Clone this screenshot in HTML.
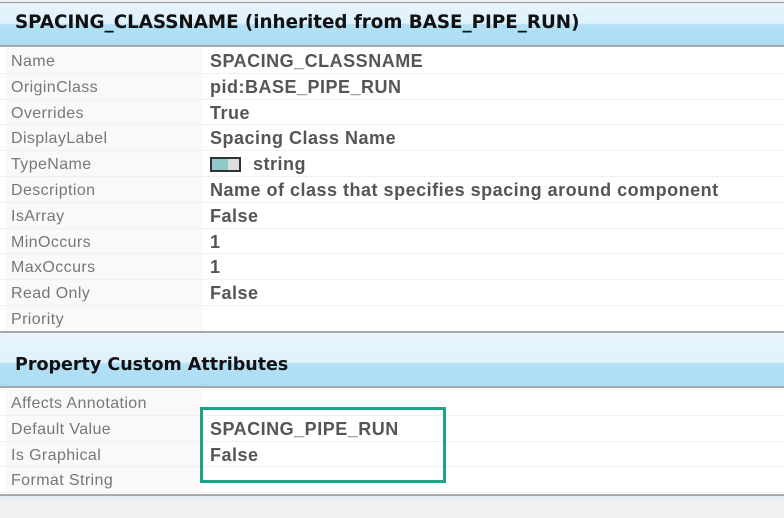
<!DOCTYPE html>
<html><head><style>
body{margin:0;width:784px;height:518px;background:#f0f0f0;position:relative;overflow:hidden;font-family:"Liberation Sans",sans-serif}
.hdr{position:absolute;left:0;width:784px;background:linear-gradient(#e6f4fd 0,#dff1fc 48%,#b2e0f6 52%,#aedcf4 100%);font-weight:bold;font-size:17.5px;color:#111;box-sizing:border-box;padding-left:15px;font-family:"DejaVu Sans",sans-serif}
.sec{position:absolute;left:0;width:784px;background:#fff}
.row{position:relative;height:25.8px;border-bottom:1px solid #f0f0f0;box-sizing:border-box}
.l{position:absolute;left:5px;top:0;width:198px;height:100%;background:#f9f9f9;color:#777;font-size:16px;letter-spacing:0.4px;line-height:27px;padding-left:6px;box-sizing:border-box}
.v{position:absolute;left:210px;top:0;color:#555;font-weight:bold;font-size:18px;letter-spacing:0.5px;line-height:27px;white-space:nowrap}
.line{position:absolute;left:0;width:784px;height:2px;background:#a8a8a8}
</style></head><body>
<div class="line" style="top:2px;height:1px;background:#999"></div>
<div class="hdr" style="top:3px;height:42px;line-height:40px;font-size:18.3px">SPACING_CLASSNAME (inherited from BASE_PIPE_RUN)</div>
<div class="line" style="top:45px"></div>
<div class="sec" style="top:47px;height:284px;padding-top:1px">
<div class="row"><div class="l">Name</div><div class="v">SPACING_CLASSNAME</div></div>
<div class="row"><div class="l">OriginClass</div><div class="v">pid:BASE_PIPE_RUN</div></div>
<div class="row"><div class="l">Overrides</div><div class="v">True</div></div>
<div class="row"><div class="l">DisplayLabel</div><div class="v">Spacing Class Name</div></div>
<div class="row"><div class="l">TypeName</div><div class="v"><span style="display:inline-block;width:31px;height:15px;border:2px solid #333;background:linear-gradient(90deg,#8fc9cc 0,#8fc9cc 60%,#ddd 60%);vertical-align:-2px;margin-right:12px;box-sizing:border-box"></span>string</div></div>
<div class="row"><div class="l">Description</div><div class="v">Name of class that specifies spacing around component</div></div>
<div class="row"><div class="l">IsArray</div><div class="v">False</div></div>
<div class="row"><div class="l">MinOccurs</div><div class="v">1</div></div>
<div class="row"><div class="l">MaxOccurs</div><div class="v">1</div></div>
<div class="row"><div class="l">Read Only</div><div class="v">False</div></div>
<div class="row"><div class="l">Priority</div></div>
</div>
<div class="line" style="top:331px"></div>
<div style="position:absolute;top:333px;left:0;width:784px;height:7px;background:#eaf3f9"></div>
<div class="hdr" style="top:340px;height:46px;line-height:50px">Property Custom Attributes</div>
<div class="line" style="top:386px"></div>
<div class="sec" style="top:388px;height:106px;padding-top:2px">
<div class="row"><div class="l">Affects Annotation</div></div>
<div class="row"><div class="l">Default Value</div><div class="v">SPACING_PIPE_RUN</div></div>
<div class="row"><div class="l">Is Graphical</div><div class="v">False</div></div>
<div class="row"><div class="l">Format String</div></div>
</div>
<div class="line" style="top:494px"></div>
<div style="position:absolute;top:496px;left:0;width:784px;height:4px;background:#e4eef5"></div>
<div style="position:absolute;left:200px;top:407px;width:246px;height:76px;border:3px solid #1aa586;box-sizing:border-box"></div>
</body></html>
